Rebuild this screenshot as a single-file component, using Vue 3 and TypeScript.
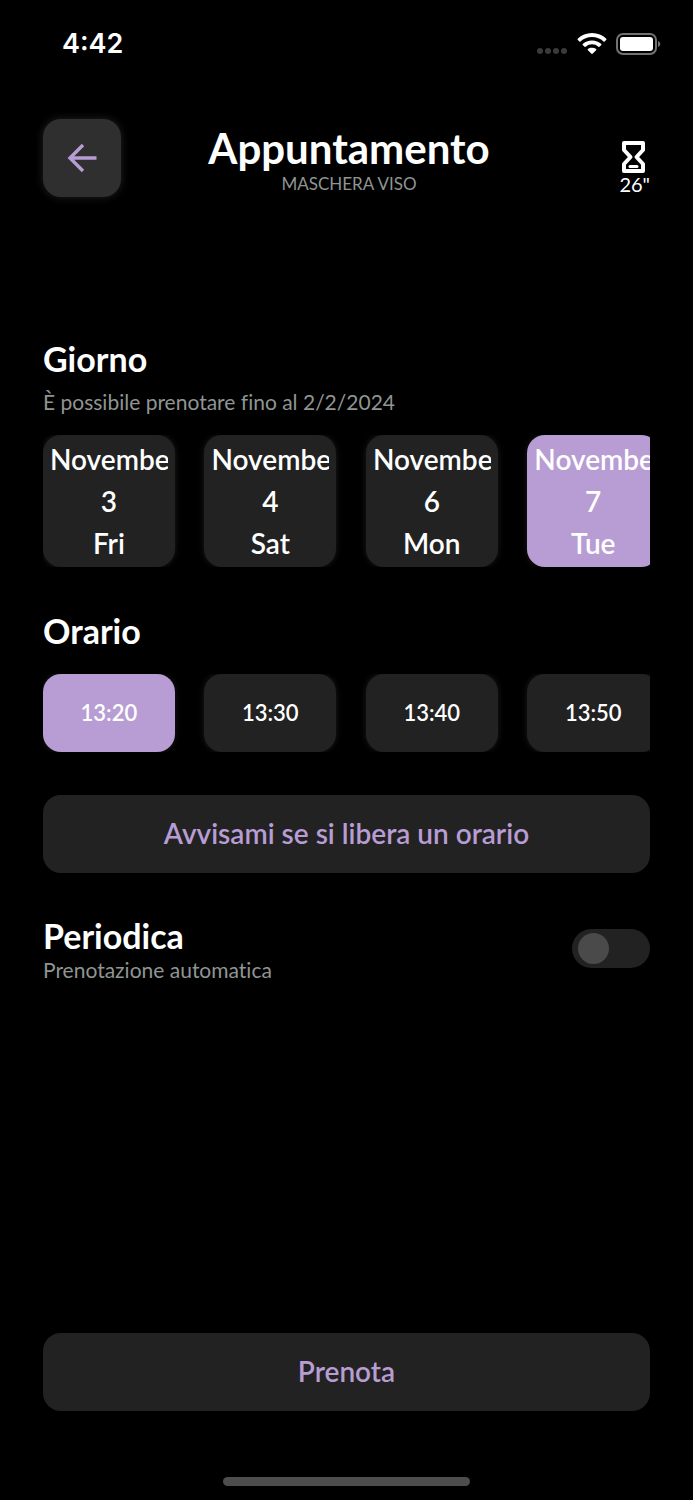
<script setup lang="ts">
import { ref } from 'vue'

interface Day {
  month: string
  day: number
  weekday: string
}

const days: Day[] = [
  { month: 'November', day: 3, weekday: 'Fri' },
  { month: 'November', day: 4, weekday: 'Sat' },
  { month: 'November', day: 6, weekday: 'Mon' },
  { month: 'November', day: 7, weekday: 'Tue' },
]
const times: string[] = ['13:20', '13:30', '13:40', '13:50']

const selectedDay = ref(3)
const selectedTime = ref(0)
const periodic = ref(false)
</script>

<template>
  <div class="screen">
    <div class="status">
      <span class="clock">4:42</span>
      <div class="indicators">
        <svg class="dots" width="32" height="24" viewBox="0 0 32 24" aria-hidden="true">
          <circle v-for="i in 4" :key="i" :cx="i * 8 - 4" cy="19" r="3" fill="#3a3a3a" />
        </svg>
        <svg class="wifi" width="30" height="24" viewBox="0 0 30 24" fill="#fff" aria-hidden="true">
          <path d="M15 1C9.400 1 4.300 3.200.700 6.700a.7.7 0 0 0 0 1l1.700 1.700a.7.7 0 0 0 1 0A16.800 16.800 0 0 1 15 4.900c4.500 0 8.600 1.700 11.600 4.500a.7.7 0 0 0 1 0l1.700-1.700a.7.7 0 0 0 0-1C25.700 3.200 20.600 1 15 1Z" />
          <path d="M15 8.400c-3.600 0-6.900 1.400-9.300 3.600a.7.7 0 0 0 0 1l1.900 1.800a.7.7 0 0 0 1 0 9.500 9.500 0 0 1 12.800 0 .7.7 0 0 0 1 0l1.900-1.800a.7.7 0 0 0 0-1A13.700 13.700 0 0 0 15 8.400Z" />
          <path d="M15 15.700c-1.600 0-3 .5-4.100 1.400a.7.7 0 0 0 0 1.100l3.600 3.600a.7.7 0 0 0 1 0l3.600-3.600a.7.7 0 0 0 0-1.100 6.500 6.500 0 0 0-4.100-1.400Z" />
        </svg>
        <svg class="battery" width="45" height="24" viewBox="0 0 45 24" aria-hidden="true">
          <rect x="1" y="2" width="39" height="20" rx="6" fill="none" stroke="#727272" stroke-width="2" />
          <rect x="4" y="5" width="33" height="14" rx="3" fill="#fff" />
          <path d="M42 9c3 1 3 5 0 6Z" fill="#727272" />
        </svg>
      </div>
    </div>

    <header class="top">
      <button class="back" type="button" aria-label="Indietro">
        <svg width="32" height="32" viewBox="0 0 32 32" fill="none" stroke="#b79dd3" stroke-width="3.4" aria-hidden="true">
          <path d="M30.500 16H4M17 3 4 16l13 13" />
        </svg>
      </button>
      <div class="heading">
        <h1>Appuntamento</h1>
        <p>MASCHERA VISO</p>
      </div>
      <div class="duration">
        <svg width="30" height="34" viewBox="0 0 30 34" fill="none" stroke="#fff" stroke-width="4" stroke-linejoin="round" stroke-linecap="round" aria-hidden="true">
          <path d="M5 3H24V10L17.500 17L24 24V31H5V24L11.500 17L5 10Z" />
          <path d="M11 26.500H18" stroke-width="3" />
        </svg>
        <span>26"</span>
      </div>
    </header>

    <main>
      <section class="day-block">
        <h2>Giorno</h2>
        <p class="note">È possibile prenotare fino al 2/2/2024</p>
        <div class="strip">
          <button
            v-for="(d, i) in days"
            :key="d.day"
            type="button"
            class="card day"
            :class="{ selected: selectedDay === i }"
            :aria-pressed="selectedDay === i"
            @click="selectedDay = i"
          >
            <span class="month">{{ d.month }}</span>
            <span>{{ d.day }}</span>
            <span>{{ d.weekday }}</span>
          </button>
        </div>
      </section>

      <section class="time-block">
        <h2>Orario</h2>
        <div class="strip">
          <button
            v-for="(t, i) in times"
            :key="t"
            type="button"
            class="card time"
            :class="{ selected: selectedTime === i }"
            :aria-pressed="selectedTime === i"
            @click="selectedTime = i"
          >
            {{ t }}
          </button>
        </div>
      </section>

      <button class="action" type="button">Avvisami se si libera un orario</button>

      <section class="periodic">
        <label for="periodic">
          <span class="label-title">Periodica</span>
          <span class="note">Prenotazione automatica</span>
        </label>
        <input id="periodic" v-model="periodic" class="switch" type="checkbox" role="switch" />
      </section>
    </main>

    <footer>
      <button class="action" type="button">Prenota</button>
      <div class="home-bar"></div>
    </footer>
  </div>
</template>

<style>
body {
  margin: 0;
  background: #000;
}
</style>

<style scoped>
.screen {
  box-sizing: border-box;
  display: flex;
  flex-direction: column;
  min-height: 100vh;
  padding: 0 43px;
  background: #000;
  color: #fff;
  font-family: Lato, 'Open Sans', sans-serif;
  font-variant-ligatures: none;
}

h1,
h2,
p {
  margin: 0;
}

button {
  padding: 0;
  border: 0;
  color: inherit;
  font-family: inherit;
  cursor: pointer;
}

.status {
  display: flex;
  justify-content: space-between;
  align-items: center;
  height: 88px;
  margin: 0 -11px 31px 19px;
}

.clock {
  font: 600 27px/32px Inter, sans-serif;
}

.indicators {
  display: flex;
  gap: 9px;
}

.top {
  display: grid;
  grid-template-columns: 78px 1fr 73px;
  align-items: center;
  height: 78px;
}

.back {
  display: grid;
  place-items: center;
  height: 78px;
  border-radius: 18px;
  background: #2f2f2f;
  box-shadow: 0 0 8px #222;
}

.heading {
  padding-top: 4px;
  text-align: center;
}

h1 {
  font-size: 42px;
  line-height: 48px;
  font-weight: 700;
}

.heading p {
  color: #8f9592;
  font-size: 17px;
  line-height: 24px;
}

.duration {
  display: flex;
  flex-direction: column;
  justify-self: end;
  padding-top: 18px;
  font-size: 20px;
  line-height: 20px;
}

.duration span {
  text-align: right;
}

h2,
.label-title {
  font-size: 34px;
  line-height: 44px;
  font-weight: 700;
}

.day-block {
  margin-top: 140px;
}

.note {
  color: #8f9592;
  font-size: 21px;
  line-height: 26px;
}

.day-block .note {
  margin: 8px 0 20px;
}

.strip {
  display: grid;
  grid-auto-flow: column;
  grid-auto-columns: 21.7%;
  column-gap: 4.9%;
  overflow-x: auto;
  overflow-y: hidden;
  scrollbar-width: none;
}

.card {
  border-radius: 18px;
  background: #222;
  box-shadow: 0 0 6px #1c1c1c;
}

.card.selected {
  background: #b79dd3;
}

.day {
  display: flex;
  flex-direction: column;
  padding: 3px 7px;
  font-size: 28px;
  line-height: 42px;
  font-weight: 600;
}

.month {
  overflow: hidden;
  text-align: left;
  white-space: nowrap;
}

.time-block {
  margin-top: 42px;
}

.time-block h2 {
  margin-bottom: 21px;
}

.time {
  height: 78px;
  padding-bottom: 2px;
  font-size: 22px;
  font-weight: 600;
}

.action {
  display: block;
  width: 100%;
  height: 78px;
  padding-bottom: 2px;
  border-radius: 18px;
  background: #222;
  color: #b79dd3;
  font-size: 28px;
  font-weight: 600;
}

main .action {
  margin-top: 43px;
}

.periodic {
  display: flex;
  justify-content: space-between;
  align-items: center;
  margin-top: 41px;
}

.periodic label {
  display: flex;
  flex-direction: column;
}

.periodic .note {
  line-height: 24px;
}

.switch {
  appearance: none;
  display: flex;
  align-items: center;
  width: 78px;
  height: 39px;
  margin: 0;
  padding: 0 6px;
  border-radius: 20px;
  background: #222;
  cursor: pointer;
}

.switch::before {
  content: '';
  width: 31px;
  height: 31px;
  border-radius: 50%;
  background: #4a4a4a;
}

.switch:checked {
  justify-content: flex-end;
}

.switch:checked::before {
  background: #b79dd3;
}

footer {
  margin-top: auto;
  padding-top: 40px;
}

.home-bar {
  width: 247px;
  height: 9px;
  margin: 66px auto 14px;
  border-radius: 5px;
  background: #4d4d4d;
}
</style>
